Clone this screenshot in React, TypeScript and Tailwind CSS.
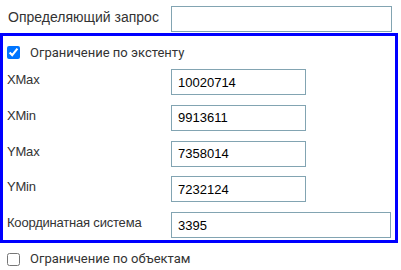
import React from 'react'

const arial = { fontFamily: '"Liberation Sans", Arial, sans-serif' }
const roboto = { fontFamily: 'Roboto, "Liberation Sans", Arial, sans-serif' }

const Field: React.FC<{ label: string; value: string; wide?: boolean }> = ({ label, value, wide }) => (
  <div className="flex items-start">
    <div className="w-[168px] pl-[4px] pt-[3px] text-[13px] leading-[16px] tracking-[-0.2px] text-[#333]">{label}</div>
    <input
      type="text"
      defaultValue={value}
      className={`h-[26px] ${wide ? 'w-[220px]' : 'w-[135px]'} border border-[#82a4b2] bg-white px-[6px] text-[13px] text-black outline-none`}
    />
  </div>
)

export default function App() {
  return (
    <div className="w-[401px] h-[270px] bg-white pt-[6px] overflow-hidden" style={arial}>
      {/* Определяющий запрос */}
      <div className="flex items-start">
        <div className="w-[171px] pl-[8px] pt-[3px] text-[14px] leading-[16px] text-[#333]">Определяющий запрос</div>
        <input
          type="text"
          className="h-[26px] w-[221px] border border-[#82a4b2] bg-white px-[6px] text-[13px] outline-none"
        />
      </div>

      {/* Ограничение по экстенту */}
      <div className="mt-[1px] w-[398px] h-[210px] border-[3px] border-[#0000ff]">
        <label className="flex items-start mt-[9px] h-[16px]">
          <input type="checkbox" defaultChecked className="ml-[4px] mr-[10px] mt-[1px] w-[13px] h-[13px]" />
          <span className="text-[13px] leading-[16px] text-[#333]" style={roboto}>Ограничение по экстенту</span>
        </label>
        <div className="flex flex-col gap-[9.75px] mt-[8px]">
          <Field label="XMax" value="10020714" />
          <Field label="XMin" value="9913611" />
          <Field label="YMax" value="7358014" />
          <Field label="YMin" value="7232124" />
          <Field label="Координатная система" value="3395" wide />
        </div>
      </div>

      {/* Ограничение по объектам */}
      <label className="flex items-start mt-[8px] h-[16px]">
        <input type="checkbox" className="ml-[7px] mr-[10px] mt-[2px] w-[13px] h-[13px]" />
        <span className="text-[13px] leading-[16px] text-[#333]" style={roboto}>Ограничение по объектам</span>
      </label>
    </div>
  )
}
